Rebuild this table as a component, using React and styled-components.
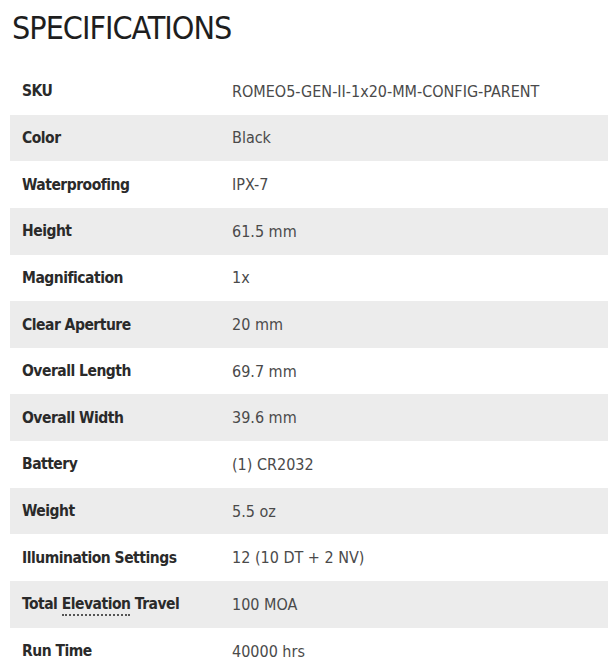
import React from 'react';
import styled, { createGlobalStyle } from 'styled-components';

const Global = createGlobalStyle`
  body {
    margin: 0;
    background: #ffffff;
    font-family: "Liberation Sans Narrow", "DejaVu Sans Condensed", "Roboto", sans-serif;
  }
`;

const Page = styled.div`
  padding: 10px 6px 0 10px;
`;

const Title = styled.h1`
  margin: 0 0 0 2px;
  font-weight: 400;
  font-size: 32px;
  line-height: 36px;
  color: #1e1e1e;
  letter-spacing: -1px;
`;

const Table = styled.div`
  margin-top: 22px;
  display: flex;
  flex-direction: column;
`;

const Row = styled.div`
  display: grid;
  grid-template-columns: 210px 1fr;
  align-items: center;
  height: 46.65px;
  padding-left: 12px;
  background: ${(p) => (p.$shaded ? '#ececec' : 'transparent')};
`;

const Label = styled.div`
  font-weight: 700;
  font-size: 15.5px;
  letter-spacing: -0.5px;
  color: #2a2a2a;
`;

const Value = styled.div`
  font-size: 16px;
  color: #4a4a4a;
`;

const Dotted = styled.span`
  border-bottom: 2px dotted #555;
  padding-bottom: 1px;
`;

const specs = [
  ['SKU', 'ROMEO5-GEN-II-1x20-MM-CONFIG-PARENT'],
  ['Color', 'Black'],
  ['Waterproofing', 'IPX-7'],
  ['Height', '61.5 mm'],
  ['Magnification', '1x'],
  ['Clear Aperture', '20 mm'],
  ['Overall Length', '69.7 mm'],
  ['Overall Width', '39.6 mm'],
  ['Battery', '(1) CR2032'],
  ['Weight', '5.5 oz'],
  ['Illumination Settings', '12 (10 DT + 2 NV)'],
  [
    <>
      Total <Dotted>Elevation</Dotted> Travel
    </>,
    '100 MOA',
  ],
  ['Run Time', '40000 hrs'],
];

export default function App() {
  return (
    <Page>
      <Global />
      <Title>SPECIFICATIONS</Title>
      <Table>
        {specs.map(([label, value], i) => (
          <Row key={i} $shaded={i % 2 === 1}>
            <Label>{label}</Label>
            <Value>{value}</Value>
          </Row>
        ))}
      </Table>
    </Page>
  );
}
